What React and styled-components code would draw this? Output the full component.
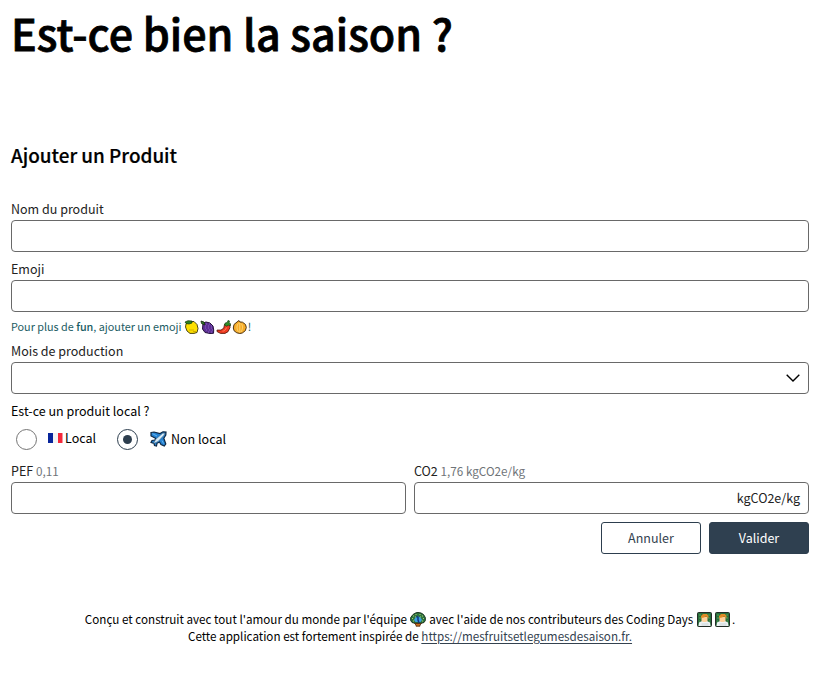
import React from 'react';
import styled, { createGlobalStyle } from 'styled-components';

const GlobalStyle = createGlobalStyle`
  *, *::before, *::after { box-sizing: border-box; }
  body {
    margin: 0;
    background: #fff;
    color: #000;
    font-family: "Noto Sans CJK SC", "Open Sans", sans-serif;
    font-size: 12.5px;
  }
`;

const Page = styled.main`
  width: 820px;
  padding: 0 11px;
`;
const Title = styled.h1`
  margin: 0;
  height: 72px;
  font-size: 43px;
  line-height: 65px;
  letter-spacing: 0.02px;
  font-weight: 500;
  -webkit-text-stroke: 0.8px #000;
  white-space: nowrap;
`;
const Subtitle = styled.h2`
  margin: 69px 0 0;
  height: 57px;
  font-size: 18.9px;
  line-height: 28px;
  font-weight: 500;
  -webkit-text-stroke: 0.2px #000;
`;
const Form = styled.form`
  display: flex;
  flex-direction: column;
`;
const Field = styled.div`
  flex: 1;
  margin-bottom: ${(p) => p.$gap ?? 6}px;
`;
const Label = styled.label`
  display: block;
  height: 22px;
  line-height: 22px;
  white-space: pre;
  color: ${(p) => p.$color || '#222'};
`;
const Muted = styled.span`
  color: #6f7478;
  font-size: 11.7px;
`;
const InputBox = styled.div`
  display: flex;
  align-items: center;
  height: 32px;
  padding-right: 8px;
  border: 1px solid #696969;
  border-radius: 4px;
  background: #fff;
`;
const Input = styled.input`
  flex: 1;
  min-width: 0;
  height: 28px;
  padding: 0 8px;
  border: 0;
  outline: 0;
  background: transparent;
  font: inherit;
`;
const Unit = styled.span`
  line-height: 30px;
  color: #222;
`;
const Helper = styled.div`
  display: flex;
  height: 22px;
  margin-top: 4px;
  margin-bottom: 2px;
  padding-top: 4px;
  font-size: 10.8px;
  line-height: 12px;
  color: #1b5c63;
  white-space: pre;
`;
const HelperText = styled.span`
  height: 12px;
`;
const Strong = styled.b`
  font-weight: 500;
`;
const Radios = styled.div`
  display: flex;
  height: 38px;
  padding: 7px 0 0 5px;
`;
const RadioOption = styled.label`
  display: flex;
  height: 21px;
  width: ${(p) => p.$width}px;
  white-space: nowrap;
`;
const RadioMark = styled.span`
  display: flex;
  align-items: center;
  justify-content: center;
  width: 21px;
  height: 21px;
  margin-right: ${(p) => p.$gap}px;
  border: 1px solid ${(p) => (p.$checked ? '#2d3e4e' : '#757575')};
  border-radius: 50%;

  &::after {
    content: "";
    display: ${(p) => (p.$checked ? 'block' : 'none')};
    width: 9px;
    height: 9px;
    border-radius: 50%;
    background: #2d3e4e;
  }
`;
const RadioText = styled.span`
  line-height: ${(p) => p.$line}px;
  margin-left: ${(p) => p.$gap}px;
`;
const Columns = styled.div`
  display: flex;
  gap: 8px;
`;
const Actions = styled.div`
  display: flex;
  justify-content: flex-end;
  gap: 8px;
`;
const Button = styled.button`
  width: 100px;
  height: 32px;
  padding: 0;
  border: 1px solid #2d3e4e;
  border-radius: 3px;
  background: ${(p) => (p.$primary ? '#2f4050' : '#fff')};
  color: ${(p) => (p.$primary ? '#fff' : '#34424f')};
  font: inherit;
  line-height: 28px;
`;
const Footer = styled.footer`
  margin-top: 57px;
  font-size: 11.65px;
`;
const FooterLine = styled.div`
  display: flex;
  justify-content: center;
  align-items: center;
  height: 17px;
  line-height: 16px;
  white-space: pre;
`;
const FooterText = styled.span`
  height: 17px;
`;
const Link = styled.a`
  color: #34424f;
  text-decoration: underline;
  text-underline-offset: 2px;
`;
const Icon = styled.svg`
  flex: none;
  display: block;
  width: ${(p) => p.$w || 14}px;
  height: ${(p) => p.$h || 14}px;
  margin: ${(p) => p.$m || 0};
`;

const Lemon = () => (
  <Icon $m="0 1px 0 0" $w={15} viewBox="0 0 15 14">
    <path d="M2 4 5 1.500h5l3 3 1 4-1 4-3 .9H6L3 11 1.500 7Z" fill="#fde000" stroke="#3b340c" strokeWidth=".9" />
    <path d="M1 2 4 .7 8 1v2L5 4 2 3.500Z" fill="#278020" stroke="#16370e" strokeWidth=".7" />
    <path d="M5 10h5M9 11.500h3" stroke="#d4ad00" />
  </Icon>
);
const Grapes = () => (
  <Icon $m="0 1px 0 0" $w={15} viewBox="0 0 15 14">
    <path d="m3 3 3-1 4 1 3 3 .7 4-.2 3.300-3.500.2-5-1L2.500 9Z" fill="#5d3094" stroke="#25113c" />
    <path d="m1 1 3 1 1 3L1.500 3.500Z" fill="#338329" stroke="#18290f" strokeWidth=".8" />
    <path d="M6 4h1m2 0h1M5 6h1m2 0h1m2 0h1M5 8h1m2 0h1m2 0h1M6 10h1m2 0h1m2 0h1M8 12h1m2 0h1" stroke="#8a60c4" />
  </Icon>
);
const Pepper = () => (
  <Icon $m="0 1px 0 0" $w={15} viewBox="0 0 15 14">
    <path d="M8.500 4.500h5.200l.3 3-2 4.200-3 1.700H4.500L1 11.500v-1.400h4l2.800-2Z" fill="#f03a20" stroke="#601d10" strokeWidth=".9" />
    <path d="m8.500 5 .7-2 2-.5.8-2 1.500.5-.5 1.700 1.500 1v2l-2-.5-2 1Z" fill="#308e27" stroke="#183d16" strokeWidth=".7" />
    <path d="M10.500 7.500c-1 2.500-2 3.500-4 3.700" stroke="#ff8b68" fill="none" strokeWidth=".8" />
  </Icon>
);
const Onion = () => (
  <Icon $m="0 1px 0 0" $w={15} viewBox="0 0 15 14">
    <path d="m7 .5 1 1.500 2.500.2 3 2.300.8 3-1 3.200-3 2.300-2.500.5-3-.7-2.700-2L1.300 8 2 4.500 5 2Z" fill="#f6ac28" stroke="#4f3413" />
    <path d="M6.500 3.500C4.500 5 4.500 9 6.500 12M9 3.500c2 2 2 5 0 8.500M7.800 3v9.500" fill="none" stroke="#ffdd86" strokeWidth=".8" />
  </Icon>
);
const Flag = () => (
  <Icon $w={15} $h={10} $m="4px 0 0" viewBox="0 0 15 10">
    <path fill="#08259b" d="M0 0h5v10H0z" />
    <path fill="#f4f4f4" d="M5 0h5v10H5z" />
    <path fill="#f5293b" d="M10 0h4.500v10H10z" />
  </Icon>
);
const Plane = () => (
  <Icon $w={17} $h={16} $m="2px 0 0" viewBox="0 0 17 16">
    <path d="M1 1.500 4 1l6 1.500L13 .8l3 .3-.2 2.900-2 3.300 2 5.700-1.500 2L11 13.500 9.500 11 7 12.300 6.500 15 4.500 14.500 4 12.500 1 11.500l1-2 3-.5.500-1.700L1 5Z" fill="#2480d0" stroke="#0e2742" strokeWidth="1.200" />
    <path d="m3.500 12.500 2.500-4.500 6.500-5.500 2-.5-.3 2L8 10.500Z" fill="#d7eaf6" stroke="#47677f" strokeWidth=".5" />
    <path d="m2.500 2.700 4.500 2.300m5 4.500 1.500 3" stroke="#62b4ee" />
  </Icon>
);
const Peacock = () => (
  <Icon $w={16} $h={15} $m="0 1px 0 0" viewBox="0 0 16 15">
    <path d="m3 2.500 3-1.700L8 .5l3 .5 2.500 1.500 1.800 3v3L14 10.500l-3 .8H5l-3-.8L.7 8.500v-3Z" fill="#2f7440" stroke="#18331e" />
    <path d="M3 4h1m1.500-1.500h1m3 0h1M12 4h1M2 6.500h1m10 0h1M3 9h1m8 0h1M5 5h1m4 0h1" stroke="#a8d36c" strokeWidth="1.100" />
    <path d="m4 8 1.500-2.500L8 4.500l2.500 1L12 8l-1.500 2h-5Z" fill="#3aa0e0" />
    <path d="m6.500 4.500 1.500.7L8 8l1 3" stroke="#103580" strokeWidth="1.500" fill="none" />
    <path d="M4.500 11.500h7L10 13v1.200H6V13Z" fill="#c9701f" stroke="#4f2910" strokeWidth=".8" />
  </Icon>
);
const Coder = ({ last }) => (
  <Icon $w={15} $h={15} $m={last ? '0 2px 0 0' : '0 3px 0 1px'} viewBox="0 0 15 15">
    <rect x=".5" y=".5" width="14" height="14" rx="1" fill="#286c3b" stroke="#222c26" />
    <path d="M2 3h2m7 0h2M2 6h2m7 0h2M2 9h1m9 0h1" stroke="#54a456" />
    <path d="m1.500 14 .5-3.500 3-1.500h5l3 1.500.5 3.500Z" fill="#edf2f3" />
    <path d="M4.500 5h6v4L9 10H6L4.500 9Z" fill="#ffd09a" />
    <path d="M4 6V4l2-2h4l1.500 2v2L9 4.500 7 5.500Z" fill="#e08a26" />
    <path d="M4.500 11h7v3h-7Z" fill="#dce3e5" />
  </Icon>
);

export default function App() {
  return (
    <>
      <GlobalStyle />
      <Page>
        <Title>Est-ce bien la saison ?</Title>
        <Subtitle>Ajouter un Produit</Subtitle>
        <Form>
          <Field>
            <Label htmlFor="name">Nom du produit</Label>
            <InputBox><Input id="name" /></InputBox>
          </Field>
          <Field $gap={0}>
            <Label htmlFor="emoji">Emoji</Label>
            <InputBox><Input id="emoji" /></InputBox>
            <Helper>
              <HelperText>Pour plus de <Strong>fun</Strong>, ajouter un emoji </HelperText>
              <Lemon /><Grapes /><Pepper /><Onion />
              <HelperText>!</HelperText>
            </Helper>
          </Field>
          <Field>
            <Label htmlFor="months">Mois de production</Label>
            <InputBox>
              <Input id="months" />
              <Icon $w={14} $h={8} viewBox="0 0 14 8">
                <path d="m.7.7 6.300 6.300L13.300.7" fill="none" stroke="#000" strokeWidth="1.400" />
              </Icon>
            </InputBox>
          </Field>
          <Label as="div" $color="#000">Est-ce un produit local ?</Label>
          <Radios>
            <RadioOption $width={101}>
              <RadioMark $gap={11} />
              <Flag />
              <RadioText $gap={2} $line={17}>Local</RadioText>
            </RadioOption>
            <RadioOption $width={120}>
              <RadioMark $checked $gap={12} />
              <Plane />
              <RadioText $gap={4} $line={19}>Non local</RadioText>
            </RadioOption>
          </Radios>
          <Columns>
            <Field $gap={8}>
              <Label htmlFor="pef">PEF <Muted>0,11</Muted></Label>
              <InputBox><Input id="pef" /></InputBox>
            </Field>
            <Field $gap={8}>
              <Label htmlFor="co2">CO2 <Muted>1,76 kgCO2e/kg</Muted></Label>
              <InputBox><Input id="co2" /><Unit>kgCO2e/kg</Unit></InputBox>
            </Field>
          </Columns>
          <Actions>
            <Button type="button">Annuler</Button>
            <Button type="button" $primary>Valider</Button>
          </Actions>
        </Form>
        <Footer>
          <FooterLine>
            <FooterText>Conçu et construit avec tout l'amour du monde par l'équipe </FooterText>
            <Peacock />
            <FooterText> avec l'aide de nos contributeurs des Coding Days </FooterText>
            <Coder /><Coder last />
            <FooterText>.</FooterText>
          </FooterLine>
          <FooterLine>
            <FooterText>Cette application est fortement inspirée de <Link href="#">https://mesfruitsetlegumesdesaison.fr.</Link></FooterText>
          </FooterLine>
        </Footer>
      </Page>
    </>
  );
}
